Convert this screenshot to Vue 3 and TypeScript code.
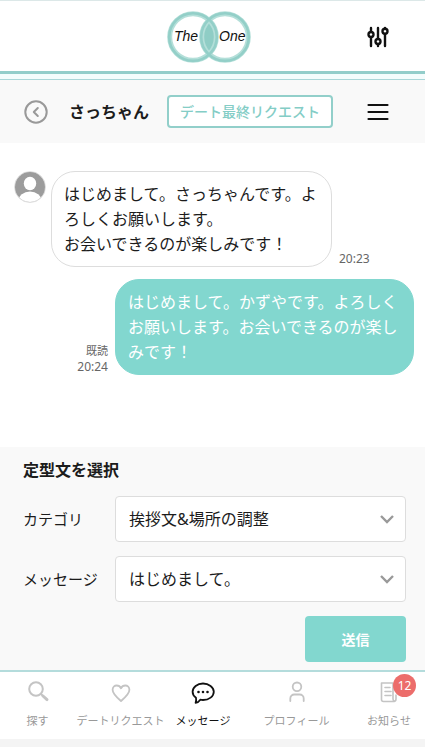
<script setup lang="ts">
import { ref } from 'vue'

interface Message {
  id: number
  mine: boolean
  lines: string[]
  time: string
  read?: boolean
}

interface NavItem {
  icon: 'search' | 'heart' | 'chat' | 'person' | 'news'
  label: string
  badge?: number
}

const messages: Message[] = [
  {
    id: 1,
    mine: false,
    lines: ['はじめまして。さっちゃんです。よろしくお願いします。', 'お会いできるのが楽しみです！'],
    time: '20:23',
  },
  {
    id: 2,
    mine: true,
    lines: ['はじめまして。かずやです。よろしくお願いします。お会いできるのが楽しみです！'],
    time: '20:24',
    read: true,
  },
]

const navItems: NavItem[] = [
  { icon: 'search', label: '探す' },
  { icon: 'heart', label: 'デートリクエスト' },
  { icon: 'chat', label: 'メッセージ' },
  { icon: 'person', label: 'プロフィール' },
  { icon: 'news', label: 'お知らせ', badge: 12 },
]

const active = ref<NavItem['icon']>('chat')
const category = ref('挨拶文&場所の調整')
const template = ref('はじめまして。')
</script>

<template>
  <div class="app">
    <header class="top">
      <svg class="logo" viewBox="0 0 84 52" role="img" aria-label="The One">
        <path d="M42 8a24 24 0 0 1 0 36a24 24 0 0 1 0-36z" fill="#8fcdc5" />
        <g fill="none">
          <circle cx="26" cy="26" r="23.3" stroke="#b4dfd9" stroke-width="5" />
          <circle cx="58" cy="26" r="23.3" stroke="#b4dfd9" stroke-width="5" />
          <circle cx="26" cy="26" r="23.8" stroke="#93cfc8" stroke-width="2.6" />
          <circle cx="58" cy="26" r="23.8" stroke="#93cfc8" stroke-width="2.6" />
        </g>
        <text x="7" y="30">The</text>
        <text x="52" y="30">One</text>
      </svg>
      <button class="icon-btn filter" type="button" aria-label="フィルター">
        <svg width="22" height="22" viewBox="0 0 22 22" fill="none" stroke="#111" stroke-width="2.4" stroke-linecap="round">
          <path d="M4 2v4M4 11v9M11 2v11M11 18v2M18 2v1M18 8v12" />
          <circle cx="4" cy="8.5" r="2.5" />
          <circle cx="11" cy="15.5" r="2.5" />
          <circle cx="18" cy="5.2" r="2.5" />
        </svg>
      </button>
    </header>
    <div class="stripe"></div>

    <section class="bar">
      <button class="icon-btn" type="button" aria-label="戻る">
        <svg width="24" height="24" viewBox="0 0 24 24" fill="none" stroke="#999" stroke-width="2">
          <circle cx="12" cy="12" r="10.7" />
          <path d="M13.8 8l-4 4 4 4" stroke-linecap="round" stroke-linejoin="round" />
        </svg>
      </button>
      <h1>さっちゃん</h1>
      <button class="request" type="button">デート最終リクエスト</button>
      <button class="icon-btn menu" type="button" aria-label="メニュー">
        <svg width="22" height="18" viewBox="0 0 22 18" fill="none" stroke="#111" stroke-width="2.2" stroke-linecap="round">
          <path d="M1.5 2h19M1.5 9h19M1.5 16h19" />
        </svg>
      </button>
    </section>

    <main class="chat">
      <article v-for="m in messages" :key="m.id" class="row" :class="{ mine: m.mine }">
        <svg v-if="!m.mine" class="avatar" width="32" height="32" viewBox="0 0 32 32" aria-hidden="true">
          <defs>
            <clipPath id="face"><circle cx="16" cy="16" r="15" /></clipPath>
          </defs>
          <circle cx="16" cy="16" r="15.5" fill="#fff" stroke="#ddd" />
          <g clip-path="url(#face)">
            <rect width="32" height="32" fill="#9c9c9c" />
            <ellipse cx="16" cy="12.5" rx="6.2" ry="6.7" fill="#fff" />
            <ellipse cx="16" cy="30" rx="11.5" ry="9.5" fill="#fff" />
          </g>
        </svg>
        <div class="bubble">
          <p v-for="line in m.lines" :key="line">{{ line }}</p>
        </div>
        <div class="meta">
          <span v-if="m.read" class="read">既読</span>
          <time>{{ m.time }}</time>
        </div>
      </article>
    </main>

    <form class="compose" @submit.prevent>
      <h2>定型文を選択</h2>
      <div class="field">
        <label for="category">カテゴリ</label>
        <div class="select">
          <select id="category" v-model="category">
            <option>挨拶文&amp;場所の調整</option>
          </select>
          <svg width="14" height="10" viewBox="0 0 14 10" aria-hidden="true"><path d="M1 2l6 6 6-6" /></svg>
        </div>
      </div>
      <div class="field">
        <label for="template">メッセージ</label>
        <div class="select">
          <select id="template" v-model="template">
            <option>はじめまして。</option>
          </select>
          <svg width="14" height="10" viewBox="0 0 14 10" aria-hidden="true"><path d="M1 2l6 6 6-6" /></svg>
        </div>
      </div>
      <button class="send" type="submit">送信</button>
    </form>

    <nav class="tabs">
      <a v-for="n in navItems" :key="n.icon" href="#" :class="{ active: n.icon === active }" @click.prevent="active = n.icon">
        <span class="glyph">
          <svg width="24" height="24" viewBox="0 0 24 24" fill="none" stroke="currentColor" stroke-width="2" stroke-linecap="round" stroke-linejoin="round">
            <template v-if="n.icon === 'search'">
              <circle cx="10" cy="9" r="6.8" />
              <path d="M15 14l2 2" />
              <path d="M17 16l4 3.6" stroke-width="3" />
            </template>
            <path v-else-if="n.icon === 'heart'" d="M12 21C8 17.5 3.6 14 3.6 9.8C3.6 7.2 5.5 5.5 7.7 5.5C9.6 5.5 11.2 6.6 12 8.3C12.8 6.6 14.4 5.5 16.3 5.5C18.5 5.5 20.4 7.2 20.4 9.8C20.4 14 16 17.5 12 21z" stroke-width="1.8" />
            <template v-else-if="n.icon === 'chat'">
              <path d="M5 17.8C2.8 16.3 1.6 14.2 1.6 11.8C1.6 7.2 6.2 3.5 12 3.5S22.8 7.2 22.8 11.8S18 20 12 20C11 20 10.2 19.9 9.3 19.7C8.2 21.3 6.5 22.6 4.6 22.8C5.3 21.3 5.3 19.5 5 17.8z" stroke-width="1.8" />
              <path d="M7.5 12h.01M12 12h.01M16.5 12h.01" stroke-width="2.6" />
            </template>
            <template v-else-if="n.icon === 'person'">
              <circle cx="12" cy="6.8" r="4.3" stroke-width="1.8" />
              <path d="M5.3 21v-2.5a4 4 0 0 1 4-4h5.4a4 4 0 0 1 4 4V21" stroke-width="1.8" />
            </template>
            <template v-else>
              <path d="M19 15v4a2.5 2.5 0 0 1-2.5 2.5H6.5A2 2 0 0 1 4.500 19.500V3H16v16a2.500 2.500 0 0 0 1.500 2.300" stroke-width="1.6" />
              <path d="M8 7.5h5M8 11.5h6M8 15.5h6" stroke-width="1.6" />
            </template>
          </svg>
          <span v-if="n.badge" class="badge">{{ n.badge }}</span>
        </span>
        <span class="label">{{ n.label }}</span>
      </a>
    </nav>
  </div>
</template>

<style>
body {
  margin: 0;
  background: #f4f4f4;
}
</style>

<style scoped>
.app {
  font-family: 'Noto Sans', 'Noto Sans CJK JP', sans-serif;
  color: #1c1c1c;
  background: #f9f9f9;
}

.app * {
  box-sizing: border-box;
}

button,
select {
  font-family: inherit;
  margin: 0;
}

h1,
h2,
p {
  margin: 0;
}

svg {
  display: block;
}

.top {
  display: grid;
  grid-template-columns: 1fr auto 1fr;
  align-items: center;
  padding: 10px 36px 8px 29px;
  border-top: 1px solid #dce8e8;
  background: #fff;
}

.logo {
  grid-column: 2;
  width: 84px;
  height: 52px;
}

.logo text {
  font: italic 14px 'Liberation Sans', sans-serif;
  fill: #111;
}

.icon-btn {
  padding: 0;
  border: 0;
  background: none;
}

.filter {
  justify-self: end;
}

.stripe {
  height: 9px;
  border-top: 3px solid #92cdca;
  border-bottom: 1px solid #a9d6d8;
  background: #f3fcfc;
}

.bar {
  display: flex;
  align-items: center;
  height: 63px;
  padding: 0 36px 0 24px;
}

h1 {
  margin-left: 21px;
  font-size: 16px;
  line-height: 24px;
  font-weight: 700;
}

.request {
  height: 33px;
  margin-left: 18px;
  padding: 0 11px;
  border: 2px solid #92cfca;
  border-radius: 4px;
  background: #fff;
  color: #84cdc6;
  font-size: 14px;
  line-height: 20px;
  font-weight: 500;
  white-space: nowrap;
}

.menu {
  margin-left: auto;
}

.chat {
  display: flex;
  flex-direction: column;
  gap: 12px;
  min-height: 304px;
  padding: 28px 11px 28px 14px;
  background: #fff;
}

.row {
  display: flex;
  align-items: flex-end;
  gap: 7px;
}

.row.mine {
  flex-direction: row-reverse;
}

.avatar {
  flex: none;
  align-self: flex-start;
  margin-right: -2px;
}

.bubble {
  width: 281px;
  padding: 10px 11px 9px 12px;
  border: 1px solid #ddd;
  border-radius: 24px;
  background: #fff;
  font-size: 16px;
  line-height: 25px;
}

.mine .bubble {
  width: 299px;
  padding: 10px 12px 9px;
  border-color: #82d7cf;
  background: #82d7cf;
  color: #fff;
}

.meta {
  display: flex;
  flex-direction: column;
  color: #666;
  font-size: 12px;
  line-height: 16px;
  text-align: right;
}

.read {
  font-size: 11px;
}

.compose {
  display: flex;
  flex-direction: column;
  gap: 14px;
  padding: 11px 19px 8px 23px;
}

h2 {
  font-size: 16px;
  line-height: 24px;
  font-weight: 700;
}

.field {
  display: grid;
  grid-template-columns: 92px 1fr;
  align-items: center;
}

.field label {
  font-size: 15px;
  line-height: 24px;
}

.select {
  display: grid;
  align-items: center;
}

.select > * {
  grid-area: 1 / 1;
}

.select svg {
  justify-self: end;
  margin-right: 12px;
  pointer-events: none;
  fill: none;
  stroke: #999;
  stroke-width: 2.4;
}

select {
  width: 100%;
  height: 46px;
  padding: 0 36px 0 13px;
  border: 1px solid #ddd;
  border-radius: 4px;
  appearance: none;
  background: #fff;
  color: #1c1c1c;
  font-size: 16px;
}

.send {
  align-self: flex-end;
  width: 101px;
  height: 46px;
  padding: 0;
  border: 0;
  border-radius: 4px;
  background: #82d7cf;
  color: #fff;
  font-size: 14px;
  font-weight: 700;
}

.tabs {
  display: grid;
  grid-template-columns: 75fr 91fr 74fr 113fr 72fr;
  padding: 8px 0 9px;
  border-top: 2px solid #b4dcdc;
  background: #fff;
}

.tabs a {
  display: flex;
  flex-direction: column;
  align-items: center;
  gap: 8px;
  color: #999;
  font-size: 11px;
  line-height: 18px;
  text-decoration: none;
  white-space: nowrap;
}

.glyph {
  position: relative;
  color: #c4c4c4;
}

.tabs .active,
.active .glyph {
  color: #111;
}

.badge {
  position: absolute;
  top: -6px;
  left: 16px;
  width: 23px;
  height: 23px;
  border-radius: 50%;
  background: #ec6d6b;
  color: #fff;
  font-size: 12px;
  line-height: 23px;
  text-align: center;
}
</style>
